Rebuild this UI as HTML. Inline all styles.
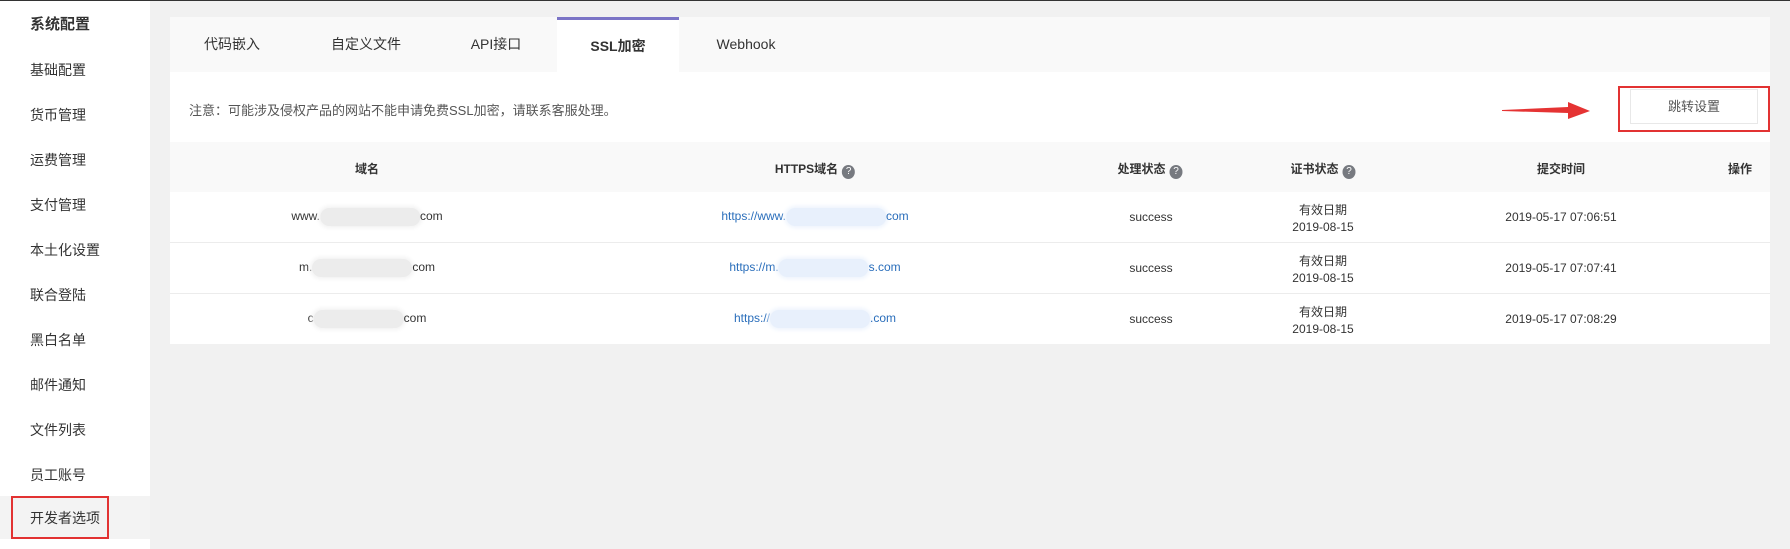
<!DOCTYPE html>
<html><head><meta charset="utf-8"><style>
*{margin:0;padding:0;box-sizing:border-box}
body{width:1790px;height:549px;background:#f1f1f1;font-family:"Liberation Sans","Noto Sans CJK SC",sans-serif;color:#333;position:relative;overflow:hidden}
.topline{position:absolute;left:0;top:0;width:1790px;height:1px;background:#333}
.side{position:absolute;left:0;top:1px;width:150px;height:548px;background:#fff}
.side div{position:absolute;left:30px;font-size:14px;color:#333;line-height:20px}
.active{position:absolute;left:0;top:496px;width:150px;height:43px;background:#f3f3f3}
.redbox{position:absolute;border:2px solid #e23232}
.panel{position:absolute;left:170px;top:17px;width:1600px;height:327px;background:#fff}
.tabs{position:absolute;left:0;top:0;width:1600px;height:55px;background:#f9f9f9}
.tab{position:absolute;top:0;height:55px;line-height:55px;font-size:14px;color:#333;text-align:center}
.tab.on{background:#fff;border-top:3px solid #7b74c6;line-height:52px;font-weight:bold}
.notice{position:absolute;left:19px;top:83px;font-size:13px;color:#555}
.thead{position:absolute;left:0;top:125px;width:1600px;height:50px;background:#f9f9f9}
.c{position:absolute;font-size:12px;transform:translateX(-50%);white-space:nowrap}
.h{font-weight:bold;top:18px;color:#333}
.q{display:inline-block;width:13px;height:14px;border-radius:50%;background:#777a80;color:#fff;font-size:10px;text-align:center;line-height:14px;vertical-align:-1px;margin-left:4px;font-weight:normal}
.row{position:absolute;left:0;width:1600px;height:51px;border-bottom:1px solid #ececec}
.lnk{color:#2a6ebb}
.blur{display:inline-block;height:18px;border-radius:9px;vertical-align:middle}
.g{background:#ececec;box-shadow:0 0 4px 2px #f2f2f2}.b{background:#e8f0fc;box-shadow:0 0 4px 2px #eef4fd}
</style></head><body>
<div class="topline"></div>
<div class="side">
<div style="top:14px;font-weight:bold;font-size:15px">系统配置</div>
<div style="top:59px">基础配置</div>
<div style="top:104px">货币管理</div>
<div style="top:149px">运费管理</div>
<div style="top:194px">支付管理</div>
<div style="top:239px">本土化设置</div>
<div style="top:284px">联合登陆</div>
<div style="top:329px">黑白名单</div>
<div style="top:374px">邮件通知</div>
<div style="top:419px">文件列表</div>
<div style="top:464px">员工账号</div>
</div>
<div class="active"></div>
<div style="position:absolute;left:30px;top:508px;font-size:14px;line-height:20px">开发者选项</div>
<div class="redbox" style="left:11px;top:496px;width:98px;height:43px"></div>
<div class="panel">
<div class="tabs">
<div class="tab" style="left:0;width:124px">代码嵌入</div>
<div class="tab" style="left:134px;width:124px">自定义文件</div>
<div class="tab" style="left:264px;width:124px">API接口</div>
<div class="tab on" style="left:387px;width:122px">SSL加密</div>
<div class="tab" style="left:516px;width:120px">Webhook</div>
</div>
<div class="notice">注意：可能涉及侵权产品的网站不能申请免费SSL加密，请联系客服处理。</div>
<div style="position:absolute;left:1460px;top:72px;width:128px;height:35px;border:1px solid #e8e8e8;text-align:center;line-height:33px;font-size:13px;color:#555">跳转设置</div>
<div class="thead">
<div class="c h" style="left:197px">域名</div>
<div class="c h" style="left:645px">HTTPS域名<span class="q">?</span></div>
<div class="c h" style="left:980px">处理状态<span class="q">?</span></div>
<div class="c h" style="left:1153px">证书状态<span class="q">?</span></div>
<div class="c h" style="left:1391px">提交时间</div>
<div class="c h" style="left:1570px">操作</div>
</div>
<div class="row" style="top:175px">
<div class="c" style="left:197px;top:16px">www.<span class="blur g" style="width:100px"></span>com</div>
<div class="c lnk" style="left:645px;top:16px">https://www.<span class="blur b" style="width:100px"></span>com</div>
<div class="c" style="left:981px;top:18px">success</div>
<div class="c" style="left:1153px;top:9px">有效日期</div>
<div class="c" style="left:1153px;top:28px">2019-08-15</div>
<div class="c" style="left:1391px;top:18px">2019-05-17 07:06:51</div>
</div>
<div class="row" style="top:226px">
<div class="c" style="left:197px;top:16px">m.<span class="blur g" style="width:100px"></span>com</div>
<div class="c lnk" style="left:645px;top:16px">https://m.<span class="blur b" style="width:90px"></span>s.com</div>
<div class="c" style="left:981px;top:18px">success</div>
<div class="c" style="left:1153px;top:9px">有效日期</div>
<div class="c" style="left:1153px;top:28px">2019-08-15</div>
<div class="c" style="left:1391px;top:18px">2019-05-17 07:07:41</div>
</div>
<div class="row" style="top:277px;border-bottom:none;height:50px">
<div class="c" style="left:197px;top:16px">c<span class="blur g" style="width:90px"></span>com</div>
<div class="c lnk" style="left:645px;top:16px">https://<span class="blur b" style="width:100px"></span>.com</div>
<div class="c" style="left:981px;top:18px">success</div>
<div class="c" style="left:1153px;top:9px">有效日期</div>
<div class="c" style="left:1153px;top:28px">2019-08-15</div>
<div class="c" style="left:1391px;top:18px">2019-05-17 07:08:29</div>
</div>
</div>
<svg style="position:absolute;left:1500px;top:101px" width="92" height="20"><polygon points="2,9 68,6 68,1 90,10 68,18 68,12 2,10" fill="#e53333"/></svg>
<div class="redbox" style="left:1618px;top:86px;width:152px;height:46px"></div>
</body></html>
